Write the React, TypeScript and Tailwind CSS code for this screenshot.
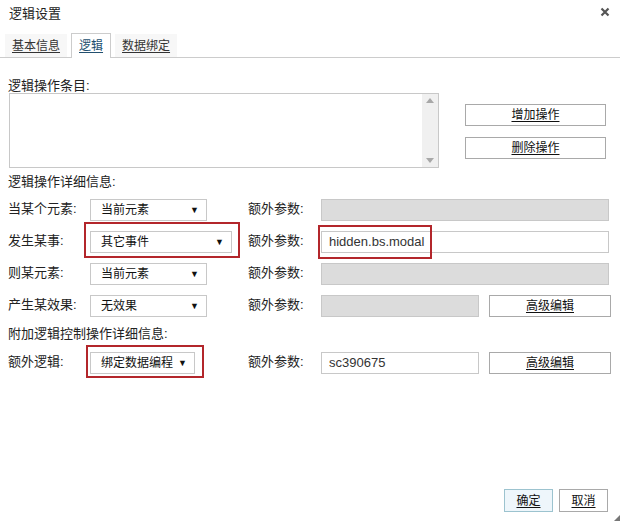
import React from 'react';

const font = { fontFamily: '"Liberation Sans", "Noto Sans CJK SC", sans-serif' };

function Select({ value, width }: { value: string; width: string }) {
  return (
    <div className={`${width} shrink-0 h-[22px] border border-[#c8c8c8] bg-white flex items-center justify-between pl-[10px] pr-[7px] text-[12px] text-[#111] whitespace-nowrap`}>
      <span>{value}</span>
      <span className="text-[9px] leading-none">▼</span>
    </div>
  );
}

function Input({ value, width, disabled }: { value?: string; width: string; disabled?: boolean }) {
  return (
    <div
      className={`${width} shrink-0 h-[22px] border border-[#c8c8c8] flex items-center pl-[7px] text-[13px] text-[#333] ${
        disabled ? 'bg-[#dcdcdc]' : 'bg-white'
      }`}
    >
      {value}
    </div>
  );
}

function Button({ children, width }: { children: React.ReactNode; width: string }) {
  return (
    <button className={`${width} shrink-0 h-[22px] border border-[#a9a9a9] bg-white text-[12px] text-[#111] underline underline-offset-2`}>
      {children}
    </button>
  );
}

function Row({
  label,
  select,
  selectWidth,
  input,
  inputWidth,
  disabled,
  button,
  markSelect,
  markInput,
}: {
  label: string;
  select: string;
  selectWidth: string;
  input?: string;
  inputWidth: string;
  disabled?: boolean;
  button?: boolean;
  markSelect?: 'a' | 'b';
  markInput?: boolean;
}) {
  return (
    <div className="flex items-center h-[22px]">
      <div className="w-[82px] shrink-0 text-[13px] text-[#222] -mt-[3px] whitespace-nowrap">{label}:</div>
      <div className="w-[158px] shrink-0 relative">
        <Select value={select} width={selectWidth} />
        {markSelect === 'a' && (
          <span className="absolute left-[-6px] top-[-9px] w-[156px] h-[36px] border-2 border-[#b3262b] pointer-events-none" />
        )}
        {markSelect === 'b' && (
          <span className="absolute left-[-4px] top-[-7px] w-[118px] h-[33px] border-2 border-[#b3262b] pointer-events-none" />
        )}
      </div>
      <div className="w-[73px] shrink-0 text-[13px] text-[#222] -mt-[3px] whitespace-nowrap">额外参数:</div>
      <div className="relative flex gap-[10px]">
        <Input value={input} width={inputWidth} disabled={disabled} />
        {button && <Button width="w-[122px]">高级编辑</Button>}
        {markInput && (
          <span className="absolute left-[-3px] top-[-6px] w-[114px] h-[34px] border-2 border-[#b3262b] pointer-events-none" />
        )}
      </div>
    </div>
  );
}

export default function App() {
  return (
    <div className="w-[620px] h-[521px] bg-white flex flex-col relative overflow-hidden" style={font}>
      {/* header */}
      <div className="h-[33px] flex items-start justify-between pl-[9px] pr-[10px] pt-[4px]">
        <span className="text-[13px] text-[#222]">逻辑设置</span>
        <svg width="10" height="10" viewBox="0 0 10 10" className="mt-[3px]">
          <path d="M1.5 1.5 L8.5 8.5 M8.5 1.5 L1.5 8.5" stroke="#555" strokeWidth="2.2" />
        </svg>
      </div>

      {/* tabs */}
      <div className="h-[25px] flex items-end border-b border-[#ccc] pl-[5px] gap-[4px] text-[12px]">
        <div className="h-[23px] px-[7px] bg-[#f7f7f7] flex items-center text-[#333] underline underline-offset-2">基本信息</div>
        <div className="h-[25px] px-[7px] bg-white border border-[#ccc] border-b-0 -mb-px flex items-center text-[#23506f] underline underline-offset-2">
          逻辑
        </div>
        <div className="h-[23px] px-[7px] bg-[#f7f7f7] flex items-center text-[#333] underline underline-offset-2">数据绑定</div>
      </div>

      <div className="px-[8px] flex flex-col">
        <div className="mt-[21px] h-[14px] leading-[14px] text-[13px] text-[#222]">逻辑操作条目:</div>
        <div className="flex h-[75px]">
          <div className="ml-px w-[430px] h-[75px] border border-[#c8c8c8] flex justify-end">
            <div className="w-[16px] bg-[#f0f0f0] flex flex-col items-center justify-between py-[4px]">
              <svg width="8" height="5" viewBox="0 0 8 5">
                <path d="M0 5 L4 0 L8 5 Z" fill="#a8a8a8" />
              </svg>
              <svg width="8" height="5" viewBox="0 0 8 5">
                <path d="M0 0 L4 5 L8 0 Z" fill="#a8a8a8" />
              </svg>
            </div>
          </div>
          <div className="ml-[26px] flex flex-col pt-[11px] gap-[11px]">
            <Button width="w-[141px]">增加操作</Button>
            <Button width="w-[141px]">删除操作</Button>
          </div>
        </div>

        <div className="mt-[7px] h-[14px] leading-[14px] text-[13px] text-[#222]">逻辑操作详细信息:</div>

        <div className="mt-[10px] flex flex-col gap-[10px]">
          <Row label="当某个元素" select="当前元素" selectWidth="w-[117px]" inputWidth="w-[288px]" disabled />
          <Row
            label="发生某事"
            select="其它事件"
            selectWidth="w-[142px]"
            input="hidden.bs.modal"
            inputWidth="w-[288px]"
            markSelect="a"
            markInput
          />
          <Row label="则某元素" select="当前元素" selectWidth="w-[117px]" inputWidth="w-[288px]" disabled />
          <Row label="产生某效果" select="无效果" selectWidth="w-[117px]" inputWidth="w-[158px]" disabled button />
        </div>

        <div className="mt-[10px] h-[14px] leading-[14px] text-[13px] text-[#222]">附加逻辑控制操作详细信息:</div>

        <div className="mt-[11px]">
          <Row
            label="额外逻辑"
            select="绑定数据编程"
            selectWidth="w-[105px]"
            input="sc390675"
            inputWidth="w-[158px]"
            button
            markSelect="b"
          />
        </div>
      </div>

      {/* footer */}
      <div className="mt-auto flex justify-end gap-[6px] pr-[12px] pb-[9px]">
        <button className="w-[49px] h-[23px] border border-[#9cc3cf] bg-[#eef6fb] text-[12px] text-[#111] underline underline-offset-2">
          确定
        </button>
        <button className="w-[49px] h-[23px] border border-[#a9a9a9] bg-white text-[12px] text-[#111] underline underline-offset-2">
          取消
        </button>
      </div>
      <svg width="6" height="6" viewBox="0 0 6 6" className="absolute right-0 bottom-0">
        <path d="M6 0 L6 6 L0 6 Z" fill="#777" />
      </svg>
    </div>
  );
}
